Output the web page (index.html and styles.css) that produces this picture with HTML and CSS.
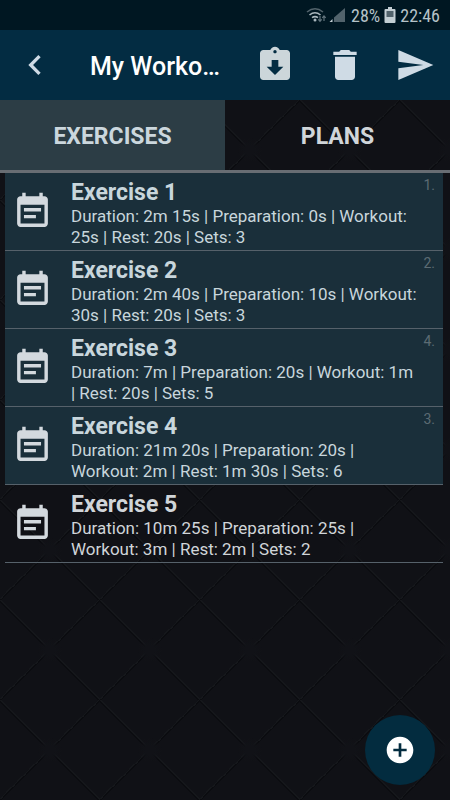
FILE: index.html
```
<!DOCTYPE html>
<html lang="en">

<head>
    <meta charset="UTF-8">
    <meta name="viewport" content="width=device-width, initial-scale=1">
    <title>My Workouts</title>
    <link rel="stylesheet" href="styles.css">
</head>

<body>
    <div class="status-bar">
        <svg class="wifi" viewBox="0 0 21 16">
            <g fill="none" stroke="#a9b7be" stroke-width="1.600">
                <path stroke="#52636c" d="M1 5Q9 -1.500 17 5" />
                <path d="M3.500 8Q9 3.500 14.500 8" />
                <path d="M6 10.700Q9 8.500 12 10.700" />
            </g>
            <circle cx="9" cy="13" r="1.500" fill="#a9b7be" />
            <path fill="none" stroke="#62747d" stroke-width="1.200" d="M14 9v5M12.300 12.400l1.700 1.900 1.700-1.900M18 14V9M16.300 10.800L18 8.900l1.700 1.900" />
        </svg>
        <svg class="signal" viewBox="0 0 16 16">
            <path fill="#52636c" d="M16 1v14H5v-4.500z" />
            <path fill="#c3ced3" d="M3.500 12v3H.5z" />
        </svg>
        <span class="percent">28%</span>
        <svg class="battery" viewBox="0 0 12 16">
            <path fill="#c3ced3" d="M4 0h4v2h2.500Q11.500 2 11.500 3v12q0 1-1 1h-9q-1 0-1-1V3q0-1 1-1H4z" />
            <path fill="#52636c" d="M2.500 4h7v6h-7z" />
        </svg>
        <span>22:46</span>
    </div>

    <header class="toolbar">
        <button class="tool" aria-label="Back">
            <svg class="icon" viewBox="0 0 24 24"><path d="M15.410 7.410L14 6l-6 6 6 6 1.410-1.410L10.830 12z" /></svg>
        </button>
        <h1>My Worko…</h1>
        <button class="tool" aria-label="Import">
            <svg class="icon import" viewBox="0 0 24 24"><path d="M19 3h-4.180C14.400 1.840 13.300 1 12 1c-1.300 0-2.400.84-2.820 2H5c-1.100 0-2 .9-2 2v14c0 1.100.9 2 2 2h14c1.100 0 2-.9 2-2V5c0-1.100-.9-2-2-2zm-7 0c.55 0 1 .45 1 1s-.45 1-1 1-1-.45-1-1 .45-1 1-1zm0 15l-5-5h3V9h4v4h3l-5 5z" /></svg>
        </button>
        <button class="tool" aria-label="Delete">
            <svg class="icon" viewBox="0 0 24 24"><path d="M6 19c0 1.100.9 2 2 2h8c1.100 0 2-.9 2-2V7H6v12zM19 4h-3.500l-1-1h-5l-1 1H5v2h14V4z" /></svg>
        </button>
        <button class="tool" aria-label="Send">
            <svg class="icon" viewBox="0 0 24 24"><path d="M2.010 21L23 12 2.010 3 2 10l15 2-15 2z" /></svg>
        </button>
    </header>

    <nav class="tabs">
        <button class="tab active">EXERCISES</button>
        <button class="tab">PLANS</button>
    </nav>

    <ul class="exercises">
        <li class="exercise selected">
            <svg class="note" viewBox="0 0 24 24"><path d="M17 10H7v2h10v-2zm2-7h-1V1h-2v2H8V1H6v2H5c-1.110 0-2 .9-2 2v14c0 1.100.89 2 2 2h14c1.100 0 2-.9 2-2V5c0-1.100-.9-2-2-2zm0 16H5V8h14v11zm-5-5H7v2h7v-2z" /></svg>
            <div class="info">
                <h2>Exercise 1</h2>
                <p>Duration: 2m 15s | Preparation: 0s | Workout:<br>25s | Rest: 20s | Sets: 3</p>
            </div>
            <span class="order">1.</span>
        </li>
        <li class="exercise selected">
            <svg class="note" viewBox="0 0 24 24"><path d="M17 10H7v2h10v-2zm2-7h-1V1h-2v2H8V1H6v2H5c-1.110 0-2 .9-2 2v14c0 1.100.89 2 2 2h14c1.100 0 2-.9 2-2V5c0-1.100-.9-2-2-2zm0 16H5V8h14v11zm-5-5H7v2h7v-2z" /></svg>
            <div class="info">
                <h2>Exercise 2</h2>
                <p>Duration: 2m 40s | Preparation: 10s | Workout:<br>30s | Rest: 20s | Sets: 3</p>
            </div>
            <span class="order">2.</span>
        </li>
        <li class="exercise selected">
            <svg class="note" viewBox="0 0 24 24"><path d="M17 10H7v2h10v-2zm2-7h-1V1h-2v2H8V1H6v2H5c-1.110 0-2 .9-2 2v14c0 1.100.89 2 2 2h14c1.100 0 2-.9 2-2V5c0-1.100-.9-2-2-2zm0 16H5V8h14v11zm-5-5H7v2h7v-2z" /></svg>
            <div class="info">
                <h2>Exercise 3</h2>
                <p>Duration: 7m | Preparation: 20s | Workout: 1m<br>| Rest: 20s | Sets: 5</p>
            </div>
            <span class="order">4.</span>
        </li>
        <li class="exercise selected">
            <svg class="note" viewBox="0 0 24 24"><path d="M17 10H7v2h10v-2zm2-7h-1V1h-2v2H8V1H6v2H5c-1.110 0-2 .9-2 2v14c0 1.100.89 2 2 2h14c1.100 0 2-.9 2-2V5c0-1.100-.9-2-2-2zm0 16H5V8h14v11zm-5-5H7v2h7v-2z" /></svg>
            <div class="info">
                <h2>Exercise 4</h2>
                <p>Duration: 21m 20s | Preparation: 20s |<br>Workout: 2m | Rest: 1m 30s | Sets: 6</p>
            </div>
            <span class="order">3.</span>
        </li>
        <li class="exercise">
            <svg class="note" viewBox="0 0 24 24"><path d="M17 10H7v2h10v-2zm2-7h-1V1h-2v2H8V1H6v2H5c-1.110 0-2 .9-2 2v14c0 1.100.89 2 2 2h14c1.100 0 2-.9 2-2V5c0-1.100-.9-2-2-2zm0 16H5V8h14v11zm-5-5H7v2h7v-2z" /></svg>
            <div class="info">
                <h2>Exercise 5</h2>
                <p>Duration: 10m 25s | Preparation: 25s |<br>Workout: 3m | Rest: 2m | Sets: 2</p>
            </div>
        </li>
    </ul>

    <button class="add" aria-label="Add exercise">
        <svg viewBox="0 0 24 24"><path d="M12 2C6.480 2 2 6.480 2 12s4.480 10 10 10 10-4.480 10-10S17.520 2 12 2zm5 11h-4v4h-2v-4H7v-2h4V7h2v4h4v2z" /></svg>
    </button>
</body>

</html>
```
FILE: styles.css
```
* {
    box-sizing: border-box;
}

body {
    margin: 0;
    min-height: 100vh;
    font-family: Roboto, "Liberation Sans", sans-serif;
    color: #d0d5d9;
    background-color: #101116;
    /* quilted diamonds */
    background-image:
        radial-gradient(circle at 50% 50%, #111217 5px, transparent 12px),
        linear-gradient(45deg, transparent 49%, #0b0c10 49%, #0b0c10 50%, #15171b 50%, #15171b 51%, transparent 51%),
        linear-gradient(-45deg, transparent 49%, #0b0c10 49%, #0b0c10 50%, #15171b 50%, #15171b 51%, transparent 51%);
    background-size: 100px 100px;
}

button {
    padding: 0;
    border: none;
    background: none;
    color: inherit;
    font-family: inherit;
    cursor: pointer;
}

.status-bar {
    display: flex;
    align-items: center;
    justify-content: flex-end;
    height: 30px;
    padding-right: 10px;
    background-color: #001722;
    color: #b5c2c8;
    font-family: "Roboto Condensed", Roboto, sans-serif;
    font-size: 18px;
}

.wifi {
    width: 21px;
    height: 16px;
    margin-right: 2px;
}

.signal {
    width: 16px;
    height: 16px;
    margin-right: 6px;
}

.battery {
    width: 12px;
    height: 16px;
    margin: 0 4px;
}

.toolbar {
    display: flex;
    align-items: center;
    height: 70px;
    background-color: #032c42;
}

.toolbar h1 {
    flex: 1;
    min-width: 0;
    margin: 0;
    padding: 2px 0 0 20px;
    color: #fff;
    font-size: 25px;
    font-weight: 500;
    white-space: nowrap;
}

.tool {
    display: flex;
    align-items: center;
    justify-content: center;
    width: 70px;
    height: 70px;
}

.icon {
    width: 40px;
    height: 40px;
    fill: #cfdbe5;
}

.icon.import {
    fill: #ccd6da;
}

.tabs {
    display: flex;
    height: 73px;
    border-bottom: 3px solid #686d73;
}

.tab {
    flex: 1;
    padding-top: 2px;
    font-size: 23px;
    font-weight: bold;
}

.tab.active {
    background-color: #2c3d45;
    color: #cbd7dd;
}

.exercises {
    margin: 0;
    padding: 0 7px 0 5px;
    list-style: none;
}

.exercise {
    position: relative;
    display: flex;
    align-items: center;
    padding: 0 7px;
    border-bottom: 1px solid #56616a;
}

.exercise.selected {
    background-color: #1a2f3a;
    color: #c8d6dc;
}

.note {
    flex: none;
    width: 41px;
    height: 41px;
    margin-right: 18px;
    fill: #d3d9de;
}

.info {
    padding: 6px 0 2px;
}

.info h2 {
    margin: 0;
    font-size: 23px;
    font-weight: bold;
    line-height: 27px;
}

.info p {
    margin: 0;
    font-size: 17px;
    line-height: 21px;
    white-space: nowrap;
}

.order {
    position: absolute;
    top: 4px;
    right: 8px;
    color: #5c6b73;
    font-size: 14px;
}

.add {
    position: fixed;
    right: 15px;
    bottom: 15px;
    display: flex;
    align-items: center;
    justify-content: center;
    width: 70px;
    height: 70px;
    border-radius: 50%;
    background-color: #032c3f;
}

.add svg {
    width: 32px;
    height: 32px;
    fill: #fff;
}
```
